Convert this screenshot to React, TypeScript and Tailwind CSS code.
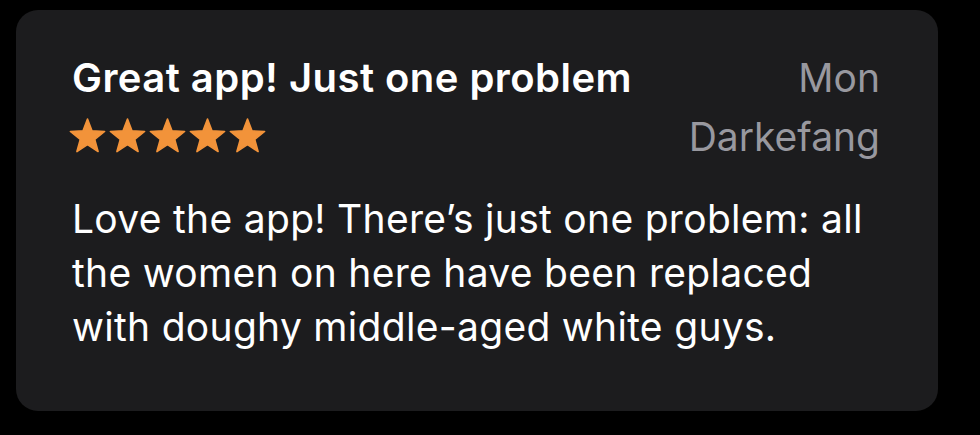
const STAR =
  "M17.5 0 L21.97 11.85 L34.62 12.44 L24.73 20.35 L28.08 32.56 L17.5 25.6 L6.92 32.56 L10.27 20.35 L0.38 12.44 L13.03 11.85 Z";

function Star() {
  return (
    <svg width="35" height="33" viewBox="0 0 35 33" className="overflow-visible">
      <path d={STAR} fill="currentColor" stroke="currentColor" strokeWidth="1.6" strokeLinejoin="round" />
    </svg>
  );
}

export default function App() {
  return (
    <div className="min-h-[435px] w-[980px] bg-black pt-[10px] pl-[16px] font-['Inter','Noto_Sans',sans-serif]">
      <div className="w-[922px] h-[401px] rounded-[22px] bg-[#1c1c1e] pl-[56px] pr-[58px] pt-[44px]">
        <div className="flex justify-between">
          <div>
            <h1 className="text-[40px] leading-[48px] font-semibold text-white tracking-[0.45px]">
              Great app! Just one problem
            </h1>
            <div className="mt-[17px] -ml-[2px] flex gap-[5px] text-[#f2933a]">
              <Star />
              <Star />
              <Star />
              <Star />
              <Star />
            </div>
          </div>
          <div className="flex flex-col items-end text-[#98989f] text-[39px] leading-[48px]">
            <span>Mon</span>
            <span className="mt-[11px]">Darkefang</span>
          </div>
        </div>
        <p className="mt-[31px] text-[39px] leading-[54px] text-white tracking-[0.3px]">
          Love the app! There’s just one problem: all
          <br />
          the women on here have been replaced
          <br />
          with doughy middle-aged white guys.
        </p>
      </div>
    </div>
  );
}
